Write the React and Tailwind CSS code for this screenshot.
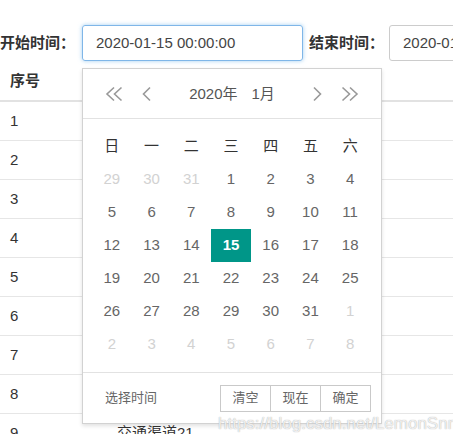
import React from "react";

const WEEK = ["日", "一", "二", "三", "四", "五", "六"];

const DAYS = [
  [[29, 0], [30, 0], [31, 0], [1, 1], [2, 1], [3, 1], [4, 1]],
  [[5, 1], [6, 1], [7, 1], [8, 1], [9, 1], [10, 1], [11, 1]],
  [[12, 1], [13, 1], [14, 1], [15, 2], [16, 1], [17, 1], [18, 1]],
  [[19, 1], [20, 1], [21, 1], [22, 1], [23, 1], [24, 1], [25, 1]],
  [[26, 1], [27, 1], [28, 1], [29, 1], [30, 1], [31, 1], [1, 0]],
  [[2, 0], [3, 0], [4, 0], [5, 0], [6, 0], [7, 0], [8, 0]],
];

const Chevron = ({ dir, double }) => {
  const w = double ? 18 : 9;
  const d = double
    ? "M9 1.5 L2 8 L9 14.5 M16.5 1.5 L9.5 8 L16.5 14.5"
    : "M8 1.5 L1.5 8 L8 14.5";
  return (
    <svg
      width={w}
      height="16"
      viewBox={`0 0 ${w} 16`}
      fill="none"
      stroke="#999"
      strokeWidth="1.6"
      style={dir === "right" ? { transform: "scaleX(-1)" } : undefined}
    >
      <path d={d} />
    </svg>
  );
};

const DatePanel = () => {
  return (
    <div className="absolute left-[82px] top-[68px] w-[300px] bg-white border border-[#d2d2d2] shadow-[0_2px_4px_rgba(0,0,0,0.12)]">
      {/* header */}
      <div className="h-[50px] flex items-center justify-between px-[22px] border-b border-[#e2e2e2]">
        <div className="flex items-center gap-[19px]">
          <Chevron double />
          <Chevron />
        </div>
        <div className="flex items-center gap-[14px] text-[15px] text-[#555] mt-[2px]">
          <span>2020年</span>
          <span>1月</span>
        </div>
        <div className="flex items-center gap-[19px]">
          <Chevron dir="right" />
          <Chevron dir="right" double />
        </div>
      </div>

      {/* body */}
      <div className="pl-[9px] pr-[11px] pt-[11px] pb-[11px]">
        <div className="grid grid-cols-7 h-[33px] items-center text-center text-[15px] text-[#333]">
          {WEEK.map((w) => (
            <span key={w}>{w}</span>
          ))}
        </div>
        {DAYS.map((row, i) => (
          <div key={i} className="grid grid-cols-7 h-[33px] text-center text-[15px]">
            {row.map(([n, t], j) => (
              <div
                key={j}
                className={
                  t === 2
                    ? "flex items-center justify-center bg-[#009688] text-white font-bold"
                    : t === 1
                    ? "flex items-center justify-center text-[#666]"
                    : "flex items-center justify-center text-[#d2d2d2]"
                }
              >
                {n}
              </div>
            ))}
          </div>
        ))}
      </div>

      {/* footer */}
      <div className="h-[51px] border-t border-[#e2e2e2] flex items-center justify-between pl-[22px] pr-[10px]">
        <span className="text-[13px] text-[#666]">选择时间</span>
        <div className="flex">
          {["清空", "现在", "确定"].map((b, i) => (
            <span
              key={b}
              className={`h-[27px] w-[51px] flex items-center justify-center border border-[#c9c9c9] text-[13px] text-[#666] ${
                i > 0 ? "-ml-px" : ""
              }`}
            >
              {b}
            </span>
          ))}
        </div>
      </div>
    </div>
  );
};

export default function App() {
  const rows = [1, 2, 3, 4, 5, 6, 7, 8, 9];
  return (
    <div className="relative w-[453px] h-[434px] overflow-hidden bg-white text-[#333] font-[family-name:'Liberation_Sans','Noto_Sans_CJK_SC',sans-serif]">
      {/* search form */}
      <div className="flex items-center pt-[25px] whitespace-nowrap">
        <span className="w-[82px] shrink-0 text-[15px] font-bold">开始时间：</span>
        <div className="w-[221px] shrink-0 h-[36px] flex items-center pl-[13px] border border-[#7fb6e8] rounded-[3px] shadow-[0_0_4px_rgba(102,175,233,0.6)] text-[15px] text-[#444]">
          2020-01-15 00:00:00
        </div>
        <span className="ml-[6px] w-[80px] shrink-0 text-[15px] font-bold">结束时间：</span>
        <div className="w-[221px] shrink-0 h-[36px] flex items-center pl-[13px] border border-[#ccc] rounded-[3px] text-[15px] text-[#444]">
          2020-01-31 00:00:00
        </div>
      </div>

      {/* table */}
      <div className="mt-px">
        <div className="h-[40px] flex items-center border-b-2 border-[#e2e2e2] px-[10px] text-[15px] font-bold">
          序号
        </div>
        {rows.map((n) => (
          <div
            key={n}
            className="h-[39px] flex items-center border-b border-[#e6e6e6] text-[15px] text-[#333]"
          >
            <span className="w-[117px] pl-[10px]">{n}</span>
            <span>{n === 9 ? "交通渠道21" : ""}</span>
          </div>
        ))}
      </div>

      <DatePanel />

      {/* watermark */}
      <div className="absolute left-[218px] top-[411px] text-[17px] text-white/80 [text-shadow:0_0_1px_#999] whitespace-nowrap">
        https://blog.csdn.net/LemonSnm
      </div>
    </div>
  );
}
